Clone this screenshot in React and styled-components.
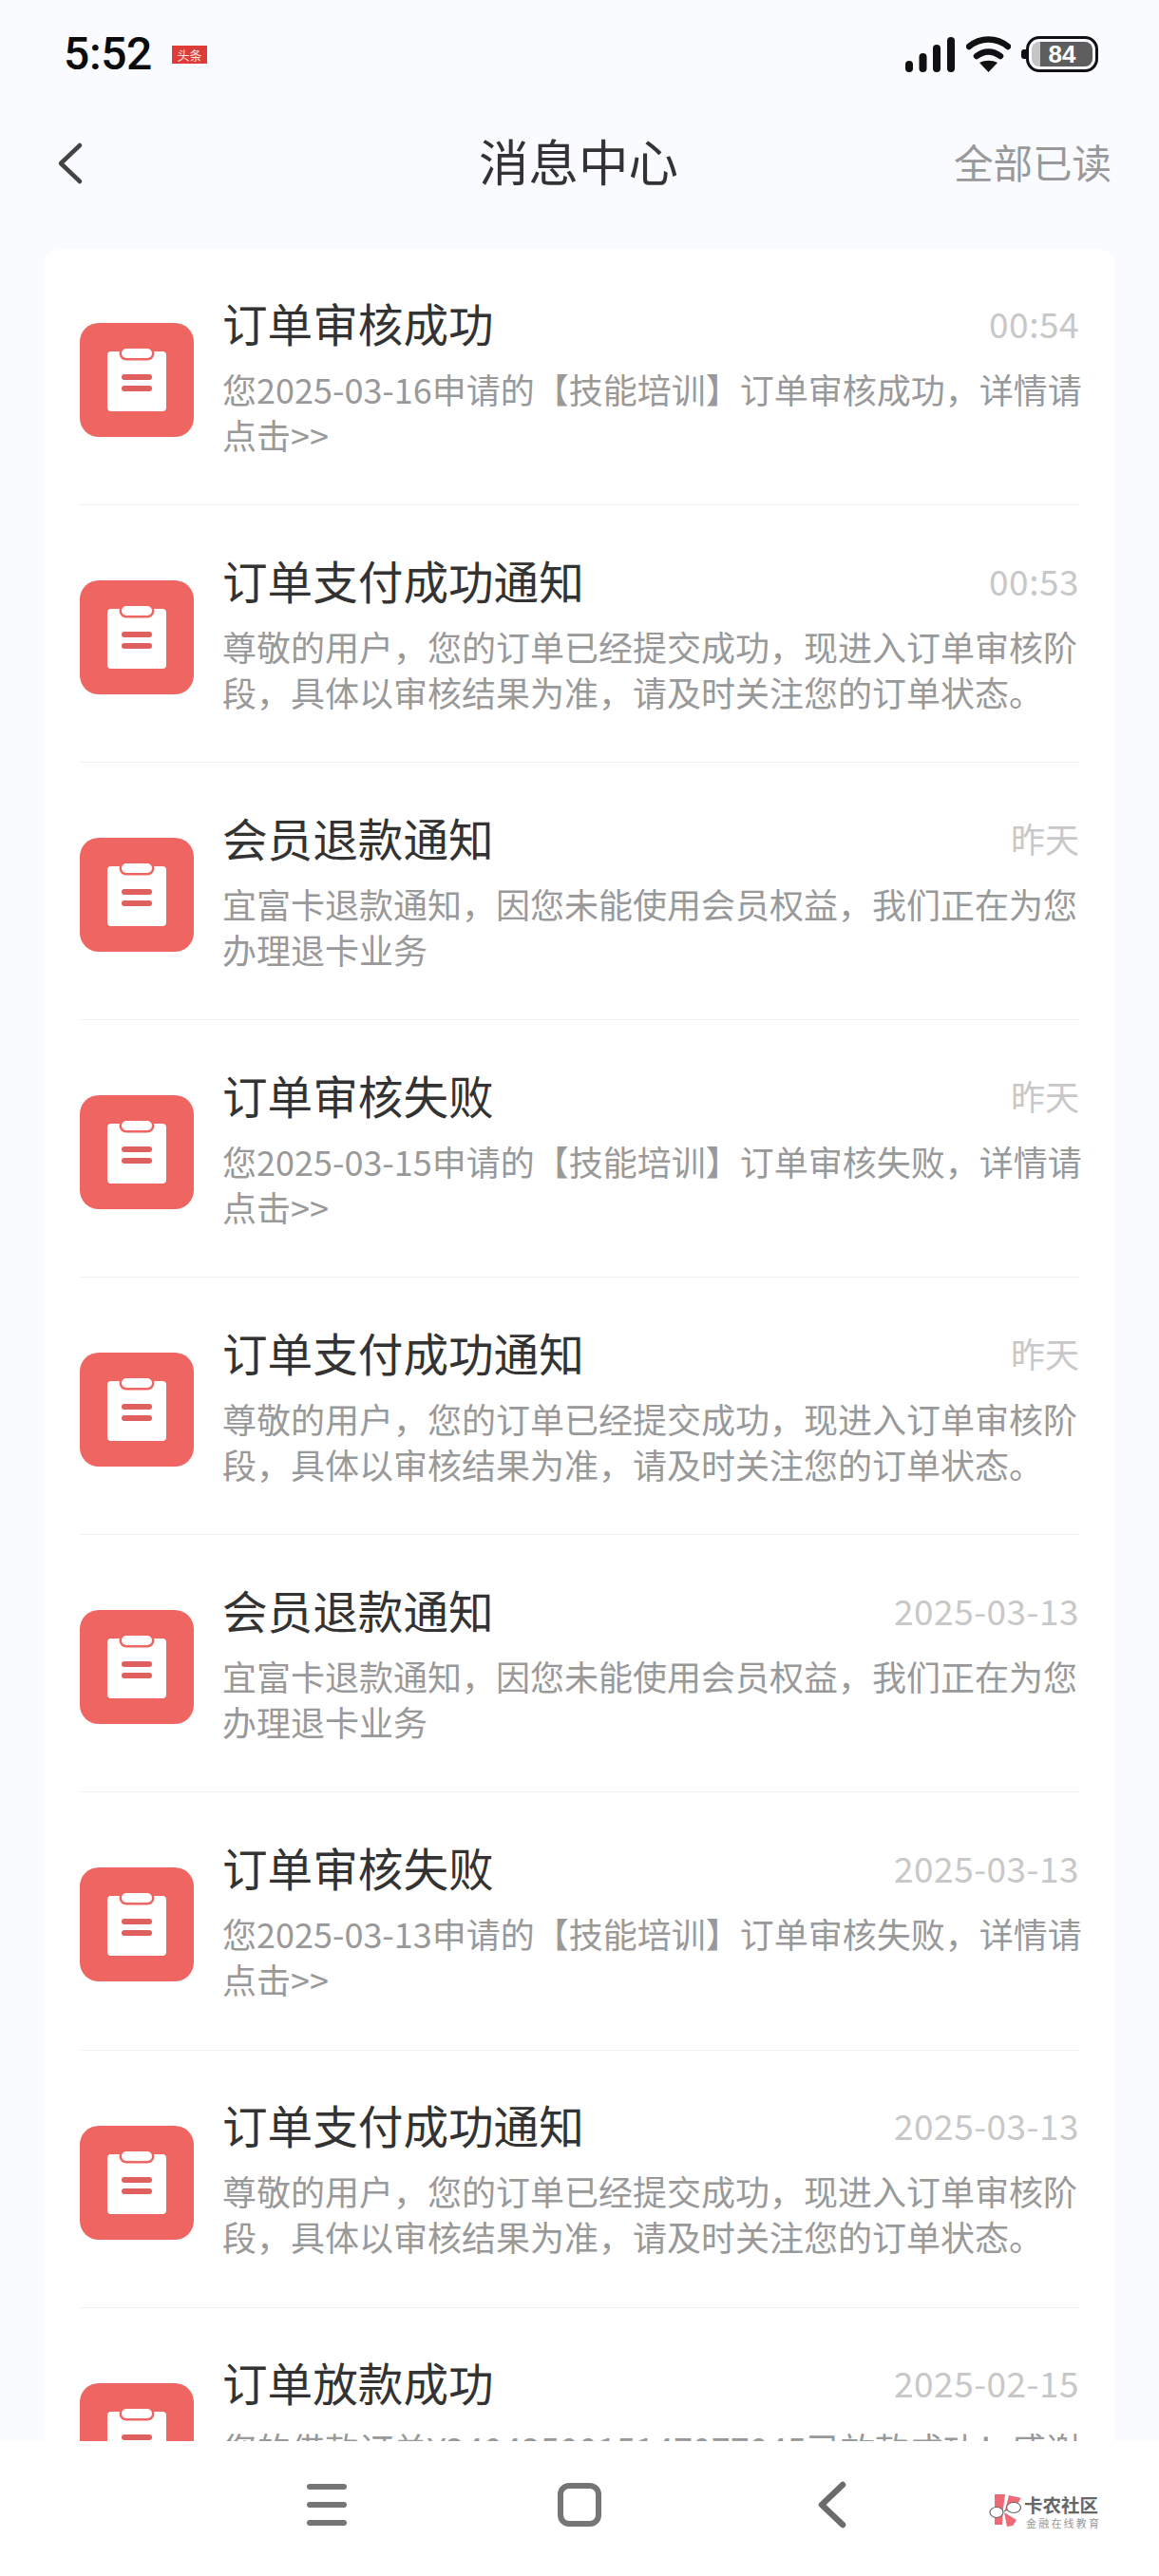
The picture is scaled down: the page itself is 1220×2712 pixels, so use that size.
import React from 'react';
import styled, { createGlobalStyle } from 'styled-components';

const GlobalStyle = createGlobalStyle`
    * { box-sizing: border-box; }
    html, body { margin: 0; padding: 0; background: #f9fbff; }
`

const Page = styled.div`
    width: 1220px;
    height: 2712px;
    display: flex;
    flex-direction: column;
    overflow: hidden;
    position: relative;
    background: #f9fbff;
    font-family: "Noto Sans CJK SC", "Noto Sans", sans-serif;
`

const StatusBar = styled.div`
    flex: 0 0 auto;
    height: 114px;
    padding: 0 64px 0 67px;
    display: flex;
    align-items: center;
    justify-content: space-between;
`

const StatusLeft = styled.div`
    display: flex;
    align-items: center;
    gap: 21px;
`

const Clock = styled.span`
    font-family: Roboto, sans-serif;
    font-size: 48px;
    font-weight: 500;
    letter-spacing: -0.4px;
    color: #0b0b0b;
    line-height: 1;
`

const NewsBadge = styled.span`
    width: 37px;
    height: 19px;
    background: #df3c39;
    color: #fbe3e0;
    font-size: 13px;
    line-height: 19px;
    text-align: center;
    overflow: hidden;
`

const StatusIcons = styled.div`
    display: flex;
    align-items: center;
    gap: 12px;
`

const Battery = styled.div`
    width: 76px;
    height: 38px;
    position: relative;
    border: 3px solid #111;
    border-radius: 14px;
    padding: 3px;
    margin-left: 4px;
    display: flex;
    &::before {
        content: "";
        position: absolute;
        left: -8px;
        top: 11px;
        width: 5px;
        height: 10px;
        background: #111;
        border-radius: 3px 0 0 3px;
    }
`

const BatteryLevel = styled.div`
    flex: 1;
    border-radius: 8px;
    background: linear-gradient(to right, #c6c6c6 0 9px, #5e5e5e 9px);
    color: #fff;
    font-family: "Liberation Sans", sans-serif;
    font-weight: 700;
    font-size: 26px;
    line-height: 26px;
    text-align: center;
`

const Header = styled.div`
    flex: 0 0 auto;
    height: 115px;
    padding: 0 50px 0 58px;
    position: relative;
    display: flex;
    align-items: center;
    justify-content: space-between;
    margin-bottom: 34px;
`

const BackButton = styled.svg`
    width: 32px;
    height: 46px;
`

const Title = styled.h1`
    position: absolute;
    left: 0;
    right: 0;
    top: 21px;
    margin: 0;
    padding-right: 2px;
    text-align: center;
    font-size: 52.5px;
    line-height: 66px;
    font-weight: 400;
    color: #333;
`

const ReadAll = styled.span`
    font-size: 41.5px;
    line-height: 58px;
    padding-bottom: 4px;
    color: #999;
`

const Card = styled.div`
    flex: 1 1 auto;
    min-height: 0;
    margin: 0 47px;
    padding: 0 37px;
    background: #fff;
    border-radius: 14px 14px 0 0;
    overflow: hidden;
`

const Row = styled.div`
    height: 271.1px;
    padding-top: 48.5px;
    display: flex;
    gap: 30px;
    border-bottom: 1px solid #f0f0f0;
    &:first-child {
        height: 269px;
        padding-top: 46.5px;
    }
`

const IconBox = styled.svg`
    flex: 0 0 auto;
    width: 120px;
    height: 120px;
    margin-top: 30.5px;
`

const RowBody = styled.div`
    flex: 1 1 auto;
    min-width: 0;
`

const RowTop = styled.div`
    display: flex;
    align-items: center;
    justify-content: space-between;
    height: 60px;
    margin-bottom: 15px;
`

const RowTitle = styled.div`
    font-size: 47.6px;
    line-height: 60px;
    color: #333;
`

const RowTime = styled.div`
    font-size: ${props => props.$digits ? "37px" : "36px"};
    line-height: 60px;
    letter-spacing: ${props => props.$digits ? "0.5px" : "0"};
    color: #c8c8c8;
`

const RowText = styled.div`
    font-size: 36px;
    line-height: 48px;
    margin-right: -8px;
    color: #999;
`

const NavBar = styled.div`
    flex: 0 0 auto;
    height: 142px;
    background: #fff;
    position: relative;
    padding: 0 211px 8px;
    display: grid;
    grid-template-columns: repeat(3, 1fr);
    align-items: center;
    justify-items: center;
`

const NavIcon = styled.svg`
    width: 52px;
    height: 52px;
`

const Watermark = styled.div`
    position: absolute;
    left: 1040px;
    top: 55px;
    width: 120px;
    height: 36px;
    display: flex;
    gap: 2px;
`

const WatermarkLogo = styled.svg`
    flex: 0 0 auto;
    width: 36px;
    height: 36px;
`

const WatermarkText = styled.div`
    display: flex;
    flex-direction: column;
    padding-top: 1px;
    color: #666;
`

const WatermarkName = styled.span`
    font-size: 19.5px;
    line-height: 21px;
    font-weight: 700;
    white-space: nowrap;
`

const WatermarkSlogan = styled.span`
    font-size: 11px;
    line-height: 14px;
    margin-top: 2px;
    letter-spacing: 2.2px;
    color: #999;
    white-space: nowrap;
    padding-left: 2px;
`

const SUCCESS = '订单审核成功';
const PAY = '订单支付成功通知';
const REFUND = '会员退款通知';
const FAIL = '订单审核失败';

const PAY_TEXT = '尊敬的用户，您的订单已经提交成功，现进入订单审核阶段，具体以审核结果为准，请及时关注您的订单状态。';
const REFUND_TEXT = '宜富卡退款通知，因您未能使用会员权益，我们正在为您办理退卡业务';

const messages = [
    { title: SUCCESS, time: '00:54', text: '您2025-03-16申请的【技能培训】订单审核成功，详情请点击>>' },
    { title: PAY, time: '00:53', text: PAY_TEXT },
    { title: REFUND, time: '昨天', text: REFUND_TEXT },
    { title: FAIL, time: '昨天', text: '您2025-03-15申请的【技能培训】订单审核失败，详情请点击>>' },
    { title: PAY, time: '昨天', text: PAY_TEXT },
    { title: REFUND, time: '2025-03-13', text: REFUND_TEXT },
    { title: FAIL, time: '2025-03-13', text: '您2025-03-13申请的【技能培训】订单审核失败，详情请点击>>' },
    { title: PAY, time: '2025-03-13', text: PAY_TEXT },
    { title: '订单放款成功', time: '2025-02-15', text: '您的借款订单Y2404250015147077045已放款成功！感谢您的使用，请留意到账信息。' },
];

function ClipboardIcon() {
    return (
        <IconBox viewBox="0 0 120 120">
            <rect width="120" height="120" rx="20" fill="#ee6562" />
            <rect x="29" y="30" width="62" height="63" rx="4" fill="#fff" />
            <rect x="41.500" y="24.500" width="37" height="15" rx="7.500" fill="#ee6562" />
            <rect x="44" y="27" width="32" height="10" rx="5" fill="#fff" />
            <rect x="44" y="54" width="32" height="6" rx="3" fill="#e0605f" />
            <rect x="44" y="66" width="32" height="6" rx="3" fill="#e0605f" />
        </IconBox>
    );
}

function SignalIcon() {
    return (
        <svg width="52" height="37" viewBox="0 0 52 37">
            <g fill="#111">
                <rect x="0" y="25" width="8" height="12" rx="4" />
                <rect x="14.500" y="17" width="8" height="20" rx="4" />
                <rect x="29" y="8" width="8" height="29" rx="4" />
                <rect x="44" y="0" width="8" height="37" rx="4" />
            </g>
        </svg>
    );
}

function WifiIcon() {
    return (
        <svg width="47" height="38" viewBox="0 0 47 38">
            <path d="M3 11C15 1 32 1 44 11" fill="none" stroke="#111" strokeWidth="6.500" strokeLinecap="round" />
            <path d="M11 21c8-6 17-6 25 0" fill="none" stroke="#111" strokeWidth="6.500" strokeLinecap="round" />
            <path d="M14 28c6-3 13-3 19 0L23.500 38z" fill="#111" />
        </svg>
    );
}

export default function App() {
    return (
        <Page>
            <GlobalStyle />
            <StatusBar>
                <StatusLeft>
                    <Clock>5:52</Clock>
                    <NewsBadge>头条</NewsBadge>
                </StatusLeft>
                <StatusIcons>
                    <SignalIcon />
                    <WifiIcon />
                    <Battery>
                        <BatteryLevel>84</BatteryLevel>
                    </Battery>
                </StatusIcons>
            </StatusBar>
            <Header>
                <BackButton viewBox="0 0 32 46">
                    <path d="M26 4L6 23l20 19" fill="none" stroke="#444" strokeWidth="4.500" strokeLinecap="round" strokeLinejoin="round" />
                </BackButton>
                <Title>消息中心</Title>
                <ReadAll>全部已读</ReadAll>
            </Header>
            <Card>
                {messages.map((m, i) => (
                    <Row key={i}>
                        <ClipboardIcon />
                        <RowBody>
                            <RowTop>
                                <RowTitle>{m.title}</RowTitle>
                                <RowTime $digits={m.time !== '昨天'}>{m.time}</RowTime>
                            </RowTop>
                            <RowText>{m.text}</RowText>
                        </RowBody>
                    </Row>
                ))}
            </Card>
            <NavBar>
                <NavIcon viewBox="0 0 52 52">
                    <path d="M8 7h36M8 26h36M8 45h36" stroke="#757575" strokeWidth="6" strokeLinecap="round" />
                </NavIcon>
                <NavIcon viewBox="0 0 52 52">
                    <rect x="6" y="6" width="40" height="40" rx="9" fill="none" stroke="#757575" strokeWidth="6" />
                </NavIcon>
                <NavIcon viewBox="0 0 52 52">
                    <path d="M37 5L15 26l22 21" fill="none" stroke="#6b6b6b" strokeWidth="6.500" strokeLinecap="round" strokeLinejoin="round" />
                </NavIcon>
                <Watermark>
                    <WatermarkLogo viewBox="0 0 36 36">
                        <path d="M7 1h11l-2 15-1 17H7z" fill="#ee6a76" />
                        <path d="M22 2l13 3-9 13h-8z" fill="#ee6a76" />
                        <path d="M17 20l13 8-4 6-6 1z" fill="#ee6a76" />
                        <path d="M17 19l3-2" stroke="#666" strokeWidth="1.200" />
                        <ellipse cx="9" cy="20" rx="7" ry="5.500" fill="#fff" stroke="#666" strokeWidth="1.200" />
                        <ellipse cx="27" cy="15" rx="7.500" ry="5.500" fill="#fff" stroke="#666" strokeWidth="1.200" />
                    </WatermarkLogo>
                    <WatermarkText>
                        <WatermarkName>卡农社区</WatermarkName>
                        <WatermarkSlogan>金融在线教育</WatermarkSlogan>
                    </WatermarkText>
                </Watermark>
            </NavBar>
        </Page>
    );
}
